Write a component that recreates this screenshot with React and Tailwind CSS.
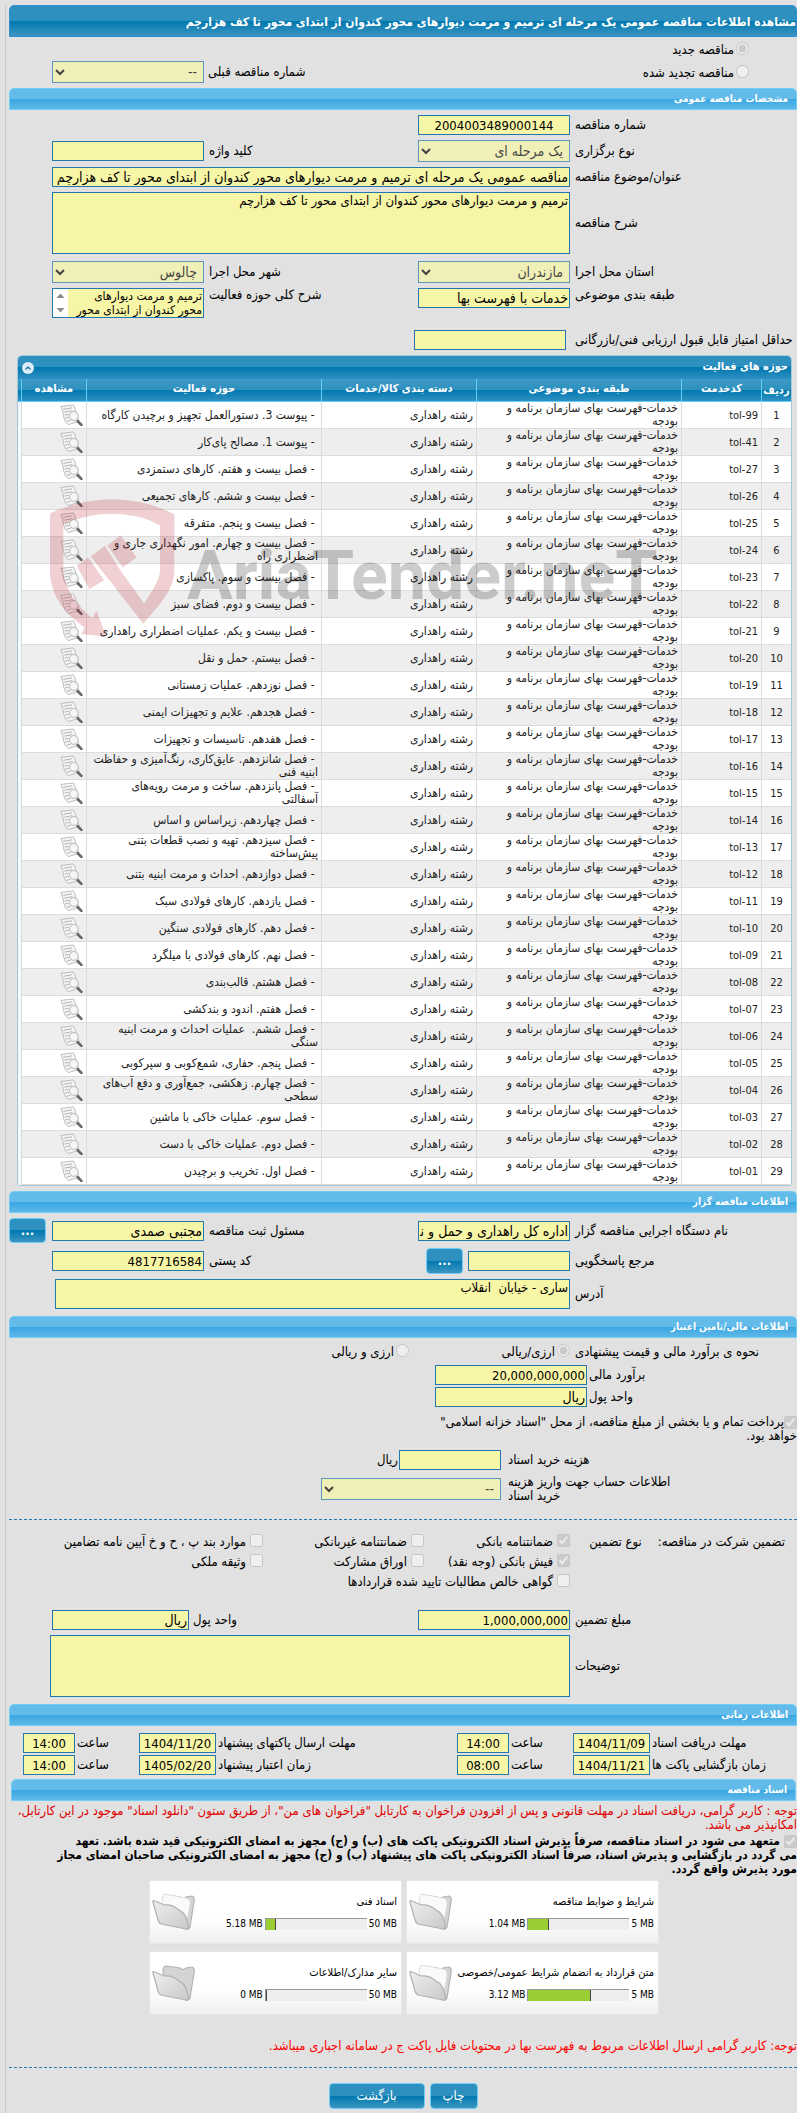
import { ChevronUp } from 'lucide-react';

const CATEGORY = 'خدمات-فهرست بهای سازمان برنامه و بودجه';
const GROUP = 'رشته راهداری';

const activities = [
  ['tol-99', 'پیوست 3. دستورالعمل تجهیز و برچیدن کارگاه'],
  ['tol-41', 'پیوست 1. مصالح پای‌کار'],
  ['tol-27', 'فصل بیست و هفتم. کارهای دستمزدی'],
  ['tol-26', 'فصل بیست و ششم. کارهای تجمیعی'],
  ['tol-25', 'فصل بیست و پنجم. متفرقه'],
  ['tol-24', 'فصل بیست و چهارم. امور نگهداری جاری و\nاضطراری راه'],
  ['tol-23', 'فصل بیست و سوم. پاکسازی'],
  ['tol-22', 'فصل بیست و دوم. فضای سبز'],
  ['tol-21', 'فصل بیست و یکم. عملیات اضطراری راهداری'],
  ['tol-20', 'فصل بیستم. حمل و نقل'],
  ['tol-19', 'فصل نوزدهم. عملیات زمستانی'],
  ['tol-18', 'فصل هجدهم. علایم و تجهیزات ایمنی'],
  ['tol-17', 'فصل هفدهم. تاسیسات و تجهیزات'],
  ['tol-16', 'فصل شانزدهم. عایق‌کاری، رنگ‌آمیزی و حفاظت\nابنیه فنی'],
  ['tol-15', 'فصل پانزدهم. ساخت و مرمت رویه‌های\nآسفالتی'],
  ['tol-14', 'فصل چهاردهم. زیراساس و اساس'],
  ['tol-13', 'فصل سیزدهم. تهیه و نصب قطعات بتنی\nپیش‌ساخته'],
  ['tol-12', 'فصل دوازدهم. احداث و مرمت ابنیه بتنی'],
  ['tol-11', 'فصل یازدهم. کارهای فولادی سبک'],
  ['tol-10', 'فصل دهم. کارهای فولادی سنگین'],
  ['tol-09', 'فصل نهم. کارهای فولادی با میلگرد'],
  ['tol-08', 'فصل هشتم. قالب‌بندی'],
  ['tol-07', 'فصل هفتم. اندود و بندکشی'],
  ['tol-06', 'فصل ششم.  عملیات احداث و مرمت ابنیه\nسنگی'],
  ['tol-05', 'فصل پنجم. حفاری، شمع‌کوبی و سپرکوبی'],
  ['tol-04', 'فصل چهارم. زهکشی، جمع‌آوری و دفع آب‌های\nسطحی'],
  ['tol-03', 'فصل سوم. عملیات خاکی با ماشین'],
  ['tol-02', 'فصل دوم. عملیات خاکی با دست'],
  ['tol-01', 'فصل اول. تخریب و برچیدن'],
];

const documents = [
  { title: 'شرایط و ضوابط مناقصه', used: 1.04, max: 5, filled: true },
  { title: 'اسناد فنی', used: 5.18, max: 50, filled: true },
  { title: 'متن قرارداد به انضمام شرایط عمومی/خصوصی', used: 3.12, max: 5, filled: true },
  { title: 'سایر مدارک/اطلاعات', used: 0, max: 50, filled: false },
];

function SectionHeader({ children, className = '' }) {
  return (
    <h2
      className={`h-[22px] rounded-t-[5px] border border-[#6fcdf6] bg-[linear-gradient(to_bottom,#63bbea_0%,#63bbea_48%,#38a6e2_50%,#5fb8e8_100%)] px-2 text-[10px] font-bold leading-[20px] text-white ${className}`}
    >
      {children}
    </h2>
  );
}

function Row({ children, className = 'items-center' }) {
  return (
    <div className={`grid grid-cols-[1fr_152px_214px_152px_43px] ${className}`}>{children}</div>
  );
}

function Label({ htmlFor, children, className = 'pl-[5px]' }) {
  return (
    <label htmlFor={htmlFor} className={`block whitespace-nowrap text-left leading-[14px] ${className}`}>
      {children}
    </label>
  );
}

function TextField({ id, value = '', className = 'w-full' }) {
  // Latin digits run wider than the Persian letters, so they are set one step smaller
  const size = /\d/.test(value) ? 'text-[13px]' : 'text-[14px]';
  return (
    <input
      id={id}
      type="text"
      readOnly
      defaultValue={value}
      className={`h-5 border border-[#2578ae] bg-[#f7f5a6] px-px leading-[18px] text-black outline-none ${size} ${className}`}
    />
  );
}

function TextBox({ id, value = '', className = '' }) {
  return (
    <textarea
      id={id}
      readOnly
      defaultValue={value}
      className={`block resize-none overflow-hidden border border-[#2578ae] bg-[#f7f5a6] px-px py-px text-[13px] leading-[14px] text-black outline-none ${className}`}
    />
  );
}

function SelectField({ id, value, className = 'w-full' }) {
  return (
    <select
      id={id}
      disabled
      className={`h-[22px] border border-[#2578ae] bg-[#f7f5a6] px-0.5 text-[14px] text-black opacity-70 ${className}`}
    >
      <option>{value}</option>
    </select>
  );
}

function Check({ id, type = 'checkbox', name, checked = false, children, gap = 'gap-1' }) {
  return (
    <span className={`flex items-start ${gap}`}>
      <input id={id} type={type} name={name} disabled defaultChecked={checked} className="size-[13px] shrink-0" />
      <label htmlFor={id} className="whitespace-nowrap pt-px leading-[14px]">
        {children}
      </label>
    </span>
  );
}

function GlossyButton({ children, className = '', ...rest }) {
  return (
    <button
      type="button"
      className={`rounded-[4px] border border-[#6fcdf6] bg-[linear-gradient(to_bottom,#2e90be_0%,#2e90be_48%,#0078b0_50%,#3d95c0_100%)] text-white ${className}`}
      {...rest}
    >
      {children}
    </button>
  );
}

function ViewIcon() {
  return (
    <svg viewBox="0 0 24 24" className="size-[23px]" fill="none" aria-hidden="true">
      <path d="M1 2.5 14 1Q16 4 17 9L20 18 8.500 21.500Q5 19 4 14 3 7 1 2.500Z" fill="#f5f5f5" stroke="#bababa" strokeWidth="1" />
      <path d="M3.500 5.500 12.500 4M4.500 8.500 13 7M5 11.500 9 10.800M5.500 14.500 9 14M7 18 11 17" stroke="#a8a8a8" strokeWidth="0.9" />
      <circle cx="14.500" cy="12.500" r="4.600" fill="#f6f6f6" fillOpacity="0.85" stroke="#b5b5b5" strokeWidth="1" />
      <path d="M18.500 18 22.300 21.800" stroke="#666" strokeWidth="2.800" strokeLinecap="round" />
    </svg>
  );
}

function FolderIcon({ filled }) {
  return (
    <svg viewBox="0 0 44 38" className="h-[38px] w-11" aria-hidden="true">
      <defs>
        <linearGradient id="folderFront" x1="0" y1="0" x2="1" y2="1">
          <stop offset="0" stopColor="#efefef" />
          <stop offset="1" stopColor="#c9c9c9" />
        </linearGradient>
      </defs>
      <path d="M11 6Q11 2 15 2L28 4Q31 7 34 4L40 3Q43 4 42 9L38 34Q37 37 34 36L13 27Z" fill="#d4d4d4" stroke="#b3b3b3" strokeWidth="1.200" />
      {filled && <path d="M10 7 12 1 34 5Q39 6 38 12L34 32 14 20Z" fill="#fafafa" stroke="#dadada" strokeWidth="0.8" />}
      <path d="M1 9Q0 7 3 8L12 12Q20 11 27 17Q34 20 36 31Q37 37 34 36L9 31Q7 30 6 27Z" fill="url(#folderFront)" stroke="#b0b0b0" strokeWidth="1.200" />
    </svg>
  );
}

function Watermark() {
  return (
    <div dir="ltr" className="pointer-events-none absolute left-8 top-[143px] flex items-center gap-3">
      <svg viewBox="0 0 375 410" className="h-[137px] w-[125px] shrink-0" fill="#b4141e" fillOpacity="0.2" aria-hidden="true">
        <path d="M0 43Q90 0 187 0Q285 0 373 45V215C373 270 330 315 280 374L122 172L165 140L212 215L282 312Q330 245 330 212V78Q265 44 187 44Q105 44 40 76V205C40 270 80 315 126 357L140 335L168 411L95 405L104 385C40 340 0 285 0 215Z" />
        <path d="M80 200 115 175 162 243 118 270ZM172 139 212 108 260 175 218 205Z" />
      </svg>
      <span className="pt-4 font-['Roboto','Liberation_Sans',sans-serif] text-[68px] font-bold leading-none text-black/20">
        AriaTender.neT
      </span>
    </div>
  );
}

function ActivityTable() {
  const head = 'border-b border-r border-[#5fd0f5] p-0 text-center align-top font-bold leading-[20px] text-white';
  const cell = 'h-[27px] border-b border-r border-[#dcdcdc] py-0 pr-[3px] text-right';

  return (
    <section className="relative ml-2 mr-[5px] overflow-hidden rounded-t-[5px] rounded-b-[3px] border border-[#a3c7dc] bg-white">
      <div className="flex h-[23px] items-center justify-between bg-[linear-gradient(to_bottom,#2e90be_0%,#2e90be_48%,#0078b0_50%,#2f8fc0_100%)] pl-1 pr-[3px]">
        <h3 className="text-[11px] font-bold text-white">حوزه های فعالیت</h3>
        <button
          type="button"
          aria-label="بستن"
          className="flex size-3 items-center justify-center rounded-full bg-[#dcebf7] text-[#1f6f9f]"
        >
          <ChevronUp size={8} strokeWidth={4} />
        </button>
      </div>
      <table className="w-full table-fixed border-separate border-spacing-0 text-[12px] leading-[13px] text-[#222]">
        <colgroup>
          <col className="w-[29px]" />
          <col className="w-20" />
          <col className="w-[205px]" />
          <col className="w-[155px]" />
          <col />
          <col className="w-[65px]" />
          <col className="w-[4px]" />
        </colgroup>
        <thead>
          <tr className="h-[23px] bg-[linear-gradient(to_bottom,#3d9ac6_0%,#2e90be_48%,#0078b0_50%,#3593c2_100%)] text-[11px]">
            <th className="border-b border-[#5fd0f5] p-0 font-bold text-white">ردیف</th>
            <th className={head}>کدخدمت</th>
            <th className={head}>طبقه بندی موضوعی</th>
            <th className={head}>دسته بندی کالا/خدمات</th>
            <th className={head}>حوزه فعالیت</th>
            <th className={head}>مشاهده</th>
            <th className={head} />
          </tr>
        </thead>
        <tbody>
          {activities.map(([code, title], i) => (
            <tr key={code} className="odd:bg-white even:bg-[#eeeeee]">
              <td className="h-[27px] border-b border-[#dcdcdc] p-0 text-center text-[11px]">{i + 1}</td>
              <td className={`${cell} text-[11px]`}>
                <bdi>{code}</bdi>
              </td>
              <td className={`${cell} pl-4`}>{CATEGORY}</td>
              <td className={cell}>{GROUP}</td>
              <td className={`${cell} whitespace-pre-wrap`}>{` - ${title}`}</td>
              <td className={cell}>
                <button type="button" aria-label={`مشاهده ${code}`} className="block">
                  <ViewIcon />
                </button>
              </td>
              <td className="border-r border-[#dcdcdc] bg-[#f4f8fb] p-0" />
            </tr>
          ))}
        </tbody>
      </table>
      <Watermark />
    </section>
  );
}

function DateRow({ from, to }) {
  return (
    <div className="grid grid-cols-[1fr_77px_64px_52px_241px_77px_64px_52px_14px] items-center">
      <Label htmlFor={from.id} className="pl-0.5">{from.label}</Label>
      <TextField id={from.id} value={from.date} className="w-full text-center" />
      <Label htmlFor={`${from.id}-hour`} className="pl-0.5">ساعت</Label>
      <TextField id={`${from.id}-hour`} value={from.hour} className="w-full text-center" />
      <Label htmlFor={to.id} className="pl-0.5">{to.label}</Label>
      <TextField id={to.id} value={to.date} className="w-full text-center" />
      <Label htmlFor={`${to.id}-hour`} className="pl-0.5">ساعت</Label>
      <TextField id={`${to.id}-hour`} value={to.hour} className="w-full text-center" />
    </div>
  );
}

function DocumentCard({ title, used, max, filled }) {
  return (
    <article className="flex h-16 items-center justify-between border border-[#e6e6e6] bg-gradient-to-b from-white from-60% to-[#efefef] pl-0.5 pr-1 text-[10px]">
      <div className="flex flex-col gap-2">
        <h3 className="whitespace-nowrap text-[11px] leading-4">{title}</h3>
        <div dir="ltr" className="flex items-center justify-end gap-0.5 leading-3">
          <span>{used} MB</span>
          <div className="h-3 w-[102px] border-l border-t border-[#999] bg-[#eee]">
            <div
              className="h-full border-r border-[#444] bg-[#9acd32]"
              style={{ width: `${Math.max((used / max) * 100, 1)}%` }}
            />
          </div>
          <span>{max} MB</span>
        </div>
      </div>
      <FolderIcon filled={filled} />
    </article>
  );
}

export default function App() {
  return (
    <div
      dir="rtl"
      lang="fa"
      className="overflow-x-hidden bg-[#e1e1e1] pl-[5px] pt-[5px] font-['DejaVu_Sans_Condensed','DejaVu_Sans',sans-serif] text-[13px] text-black"
    >
      <main className="border-l border-[#c9c9c9] pb-[5px] pl-[3px]">
        <h1 className="h-8 whitespace-nowrap rounded-t-[5px] border border-[#2f8fd6] bg-[linear-gradient(to_bottom,#2e90be_0%,#2e90be_48%,#0078b0_52%,#3d95c0_100%)] text-[12px] font-bold leading-[32px] text-white">
          مشاهده اطلاعات مناقصه عمومی یک مرحله ای ترمیم و مرمت دیوارهای محور کندوان از ابتدای محور تا کف هزارچم
        </h1>

        <div className="flex h-[51px] justify-between pr-12">
          <div className="flex flex-col gap-2 pt-[5px]">
            <Check id="new" type="radio" name="tender" checked gap="gap-0.5">مناقصه جدید</Check>
            <Check id="renewed" type="radio" name="tender" gap="gap-0.5">مناقصه تجدید شده</Check>
          </div>
          <div className="flex items-center gap-1 pl-[43px] pt-[19px]">
            <Label htmlFor="previous" className="">شماره مناقصه قبلی</Label>
            <SelectField id="previous" value="--" className="w-[152px]" />
          </div>
        </div>

        <SectionHeader>مشخصات مناقصه عمومی</SectionHeader>
        <div className="flex flex-col gap-[5px] pb-[5px] pt-[5px]">
          <Row>
            <Label htmlFor="number">شماره مناقصه</Label>
            <TextField id="number" value="2004003489000144" className="w-full text-center" />
          </Row>
          <Row>
            <Label htmlFor="kind">نوع برگزاری</Label>
            <SelectField id="kind" value="یک مرحله ای" />
            <Label htmlFor="keyword">کلید واژه</Label>
            <TextField id="keyword" />
          </Row>
          <Row>
            <Label htmlFor="subject">عنوان/موضوع مناقصه</Label>
            <TextField
              id="subject"
              value="مناقصه عمومی یک مرحله ای ترمیم و مرمت دیوارهای محور کندوان از ابتدای محور تا کف هزارچم"
              className="col-span-3"
            />
          </Row>
          <Row>
            <Label htmlFor="description">شرح مناقصه</Label>
            <TextBox
              id="description"
              value="ترمیم و مرمت دیوارهای محور کندوان از ابتدای محور تا کف هزارچم"
              className="col-span-3 h-[62px]"
            />
          </Row>
          <Row className="items-center pt-0.5">
            <Label htmlFor="province">استان محل اجرا</Label>
            <SelectField id="province" value="مازندران" />
            <Label htmlFor="city">شهر محل اجرا</Label>
            <SelectField id="city" value="چالوس" />
          </Row>
          <Row className="items-start">
            <Label htmlFor="category">طبقه بندی موضوعی</Label>
            <TextField id="category" value="خدمات با فهرست بها" />
            <Label htmlFor="scope">شرح کلی حوزه فعالیت</Label>
            <div className="flex h-[30px] border border-[#2578ae] bg-[#f7f5a6]">
              <textarea
                id="scope"
                readOnly
                defaultValue="ترمیم و مرمت دیوارهای محور کندوان از ابتدای محور تا کف هزارچم"
                className="h-7 min-w-0 grow resize-none overflow-hidden px-px text-[12px] leading-[14px] outline-none"
              />
              <svg viewBox="0 0 15 28" className="h-7 w-[15px] shrink-0 bg-white" fill="#8b8b8b" aria-hidden="true">
                <path d="M7.500 4.500 11.500 9H3.500ZM7.500 23.500 11.500 19H3.500Z" />
              </svg>
            </div>
          </Row>
          <div className="grid grid-cols-[1fr_557px] items-center pt-[7px]">
            <div className="flex justify-end pl-[9px]">
              <Label htmlFor="min-score" className="">حداقل امتیاز قابل قبول ارزیابی فنی/بازرگانی</Label>
            </div>
            <TextField id="min-score" className="w-[152px]" />
          </div>
        </div>

        <ActivityTable />

        <SectionHeader className="mt-[5px]">اطلاعات مناقصه گزار</SectionHeader>
        <div className="flex flex-col gap-[5px] pb-[7px] pt-[5px]">
          <Row>
            <Label htmlFor="agency">نام دستگاه اجرایی مناقصه گزار</Label>
            <TextField id="agency" value="اداره کل راهداری و حمل و نقل جاده ای" />
            <Label htmlFor="registrar">مسئول ثبت مناقصه</Label>
            <TextField id="registrar" value="مجتبی صمدی" />
            <GlossyButton aria-label="جزئیات مسئول" className="mr-1.5 h-[25px] w-[37px] font-bold">...</GlossyButton>
          </Row>
          <Row>
            <Label htmlFor="responder">مرجع پاسخگویی</Label>
            <div className="flex items-center gap-[5px]">
              <TextField id="responder" className="w-[102px]" />
              <GlossyButton aria-label="انتخاب مرجع" className="h-[26px] w-[37px] font-bold">...</GlossyButton>
            </div>
            <Label htmlFor="postal">کد پستی</Label>
            <TextField id="postal" value="4817716584" />
          </Row>
          <Row>
            <Label htmlFor="address">آدرس</Label>
            <TextBox id="address" value="ساری - خیابان  انقلاب" className="col-span-3 ml-[3px] h-[30px]" />
          </Row>
        </div>

        <SectionHeader>اطلاعات مالی/تامین اعتبار</SectionHeader>
        <div className="flex pt-1.5">
          <span className="w-[227px] whitespace-nowrap pl-[5px] pt-px text-left leading-[14px]">نحوه ی برآورد مالی و قیمت پیشنهادی</span>
          <span className="w-[161px]">
            <Check id="single" type="radio" name="currency" checked gap="gap-0.5">ارزی/ریالی</Check>
          </span>
          <Check id="both" type="radio" name="currency" gap="gap-0.5">ارزی و ریالی</Check>
        </div>
        <div className="flex flex-col gap-0.5 pt-1.5">
          <div className="grid grid-cols-[1fr_578px] items-center">
            <Label htmlFor="estimate" className="pl-0.5">برآورد مالی</Label>
            <TextField id="estimate" value="20,000,000,000" className="w-[152px]" />
          </div>
          <div className="grid grid-cols-[1fr_578px] items-center">
            <Label htmlFor="estimate-unit" className="pl-0.5">واحد پول</Label>
            <TextField id="estimate-unit" value="ریال" className="w-[152px]" />
          </div>
        </div>
        <div className="pt-2 leading-[14px]">
          <input id="treasury" type="checkbox" disabled defaultChecked className="size-[13px] align-bottom" />
          <label htmlFor="treasury">
            پرداخت تمام و یا بخشی از مبلغ مناقصه، از محل &quot;اسناد خزانه اسلامی&quot;
            <br />
            خواهد بود.
          </label>
        </div>
        <div className="flex flex-col gap-[5px] pt-[7px]">
          <div className="grid grid-cols-[1fr_492px] items-center">
            <Label htmlFor="doc-cost" className="pl-[7px]">هزینه خرید اسناد</Label>
            <div className="flex items-center gap-px">
              <TextField id="doc-cost" className="w-[102px]" />
              <span>ریال</span>
            </div>
          </div>
          <div className="grid grid-cols-[1fr_492px] items-center">
            <label htmlFor="account" className="pl-[7px] text-left leading-[14px]">
              اطلاعات حساب جهت واریز هزینه
              <br />
              خرید اسناد
            </label>
            <SelectField id="account" value="--" className="w-[180px]" />
          </div>
        </div>
        <hr className="mt-4 border-dashed border-[#2578ae]" />

        <div className="flex pt-[14px]">
          <div className="flex w-[227px] gap-4 whitespace-nowrap pr-3 pt-px leading-[14px]">
            <span>تضمین شرکت در مناقصه:</span>
            <span>نوع تضمین</span>
          </div>
          <div className="grid grid-cols-[146px_161px_auto] gap-y-[5px]">
            <Check id="g1" checked>ضمانتنامه بانکی</Check>
            <Check id="g2">ضمانتنامه غیربانکی</Check>
            <Check id="g3">موارد بند پ ، ح و خ آیین نامه تضامین</Check>
            <Check id="g4" checked>فیش بانکی (وجه نقد)</Check>
            <Check id="g5">اوراق مشارکت</Check>
            <Check id="g6">وثیقه ملکی</Check>
            <Check id="g7">گواهی خالص مطالبات تایید شده قراردادها</Check>
          </div>
        </div>
        <div className="flex flex-col gap-[5px] pb-[7px] pt-[21px]">
          <Row>
            <Label htmlFor="guarantee">مبلغ تضمین</Label>
            <TextField id="guarantee" value="1,000,000,000" />
            <div className="col-span-2 flex items-center justify-end gap-1">
              <Label htmlFor="guarantee-unit" className="">واحد پول</Label>
              <TextField id="guarantee-unit" value="ریال" className="w-[137px]" />
            </div>
          </Row>
          <Row>
            <Label htmlFor="notes">توضیحات</Label>
            <TextBox id="notes" className="col-span-3 -ml-0.5 h-[62px]" />
          </Row>
        </div>

        <SectionHeader>اطلاعات زمانی</SectionHeader>
        <div className="flex flex-col gap-0.5 pb-1 pt-[7px]">
          <DateRow
            from={{ id: 'receive', label: 'مهلت دریافت اسناد', date: '1404/11/09', hour: '14:00' }}
            to={{ id: 'submit', label: 'مهلت ارسال پاکتهای پیشنهاد', date: '1404/11/20', hour: '14:00' }}
          />
          <DateRow
            from={{ id: 'opening', label: 'زمان بازگشایی پاکت ها', date: '1404/11/21', hour: '08:00' }}
            to={{ id: 'validity', label: 'زمان اعتبار پیشنهاد', date: '1405/02/20', hour: '14:00' }}
          />
        </div>

        <SectionHeader className="ml-0.5 mr-px">اسناد مناقصه</SectionHeader>
        <p className="pt-[3px] leading-[14px] text-[#e00000]">
          توجه : کاربر گرامی، دریافت اسناد در مهلت قانونی و پس از افزودن فراخوان به کارتابل &quot;فراخوان های من&quot;، از طریق ستون &quot;دانلود اسناد&quot; موجود در این کارتابل،
          <br />
          امکانپذیر می باشد.
        </p>
        <div className="pt-0.5 text-[12px] font-bold leading-[14px]">
          <input id="commitment" type="checkbox" disabled defaultChecked className="ml-1 size-[13px] align-bottom" />
          <label htmlFor="commitment">
            متعهد می شود در اسناد مناقصه، صرفاً پذیرش اسناد الکترونیکی پاکت های (ب) و (ج) مجهز به امضای الکترونیکی قید شده باشد. تعهد
            <br />
            می گردد در بازگشایی و پذیرش اسناد، صرفاً اسناد الکترونیکی پاکت های پیشنهاد (ب) و (ج) مجهز به امضای الکترونیکی صاحبان امضای مجاز
            <br />
            مورد پذیرش واقع گردد.
          </label>
        </div>
        <div className="mr-[138px] grid w-[510px] grid-cols-2 gap-x-1 gap-y-[7px] pt-1">
          {documents.map((doc) => (
            <DocumentCard key={doc.title} {...doc} />
          ))}
        </div>
        <p className="pt-6 leading-[14px] text-[#ff0000]">
          توجه: کاربر گرامی ارسال اطلاعات مربوط به فهرست بها در محتویات فایل پاکت ج در سامانه اجباری میباشد.
        </p>
        <hr className="mt-[14px] border-dashed border-[#2578ae]" />
        <div className="flex justify-center gap-[5px] pt-[15px]">
          <GlossyButton className="h-[26px] w-12 text-[13px]">چاپ</GlossyButton>
          <GlossyButton className="h-[26px] w-24 text-[13px]">بازگشت</GlossyButton>
        </div>
      </main>
    </div>
  );
}
